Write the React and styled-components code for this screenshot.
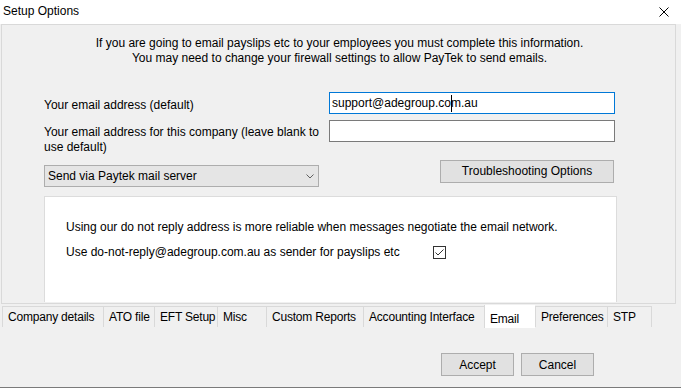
import React from 'react';
import styled, { createGlobalStyle } from 'styled-components';

const GlobalStyle = createGlobalStyle`
    html, body {
        margin: 0;
        padding: 0;
        background: #ffffff;
    }
    body {
        font-family: "Liberation Sans", Arial, sans-serif;
        font-size: 12px;
        color: #000000;
    }
    *{
        box-sizing: border-box;
    }
`;

const tabs = [
    {label: 'Company details', w: 101},
    {label: 'ATO file', w: 51},
    {label: 'EFT Setup', w: 63},
    {label: 'Misc', w: 49},
    {label: 'Custom Reports', w: 97},
    {label: 'Accounting Interface', w: 121},
    {label: 'Email', w: 51, selected: true},
    {label: 'Preferences', w: 72},
    {label: 'STP', w: 45},
];

const App = () => {
    return(
        <>
            <GlobalStyle />
            <Window>
                <TitleBar>
                    <span>Setup Options</span>
                    <svg width="10" height="10" viewBox="0 0 10 10">
                        <path d="M0.5 0.5 L9.5 9.5 M9.5 0.5 L0.5 9.5" stroke="#000" strokeWidth="1" fill="none"/>
                    </svg>
                </TitleBar>
                <Body>
                    <Panel>
                        <Intro>
                            If you are going to email payslips etc to your employees you must complete this information.<br/>
                            You may need to change your firewall settings to allow PayTek to send emails.
                        </Intro>
                        <Form>
                            <Label $top={6}>Your email address (default)</Label>
                            <TextBox $focused>support@adegroup.co<Caret/>m.au</TextBox>
                            <Label $top={5}>Your email address for this company (leave blank to use default)</Label>
                            <TextBox></TextBox>
                        </Form>
                        <ActionRow>
                            <Select>
                                <span>Send via Paytek mail server</span>
                                <svg width="8" height="5" viewBox="0 0 8 5">
                                    <polyline points="0.5,0.5 4,4 7.5,0.5" stroke="#606060" strokeWidth="1" fill="none"/>
                                </svg>
                            </Select>
                            <Button $w={174}>Troubleshooting Options</Button>
                        </ActionRow>
                        <GroupBox>
                            <p>Using our do not reply address is more reliable when messages negotiate the email network.</p>
                            <CheckRow>
                                <span>Use do-not-reply@adegroup.com.au as sender for payslips etc</span>
                                <CheckBox>
                                    <svg width="11" height="11" viewBox="0 0 11 11">
                                        <polyline points="1.5,5.5 4,8 9.5,2.5" stroke="#333" strokeWidth="1" fill="none"/>
                                    </svg>
                                </CheckBox>
                            </CheckRow>
                        </GroupBox>
                    </Panel>
                    <TabStrip>
                        {tabs.map((t, i) => (
                            <Tab key={t.label} $w={t.w} $selected={t.selected} $last={i === tabs.length - 1}>
                                {t.label}
                            </Tab>
                        ))}
                    </TabStrip>
                    <Footer>
                        <Button $w={73}>Accept</Button>
                        <Button $w={73}>Cancel</Button>
                    </Footer>
                </Body>
            </Window>
        </>
    );
}

const Window = styled.div`
    width: 681px;
    height: 388px;
    background: #f0f0f0;
    display: flex;
    flex-direction: column;
    border-bottom: 1px solid #7a7a7a;
`;

const TitleBar = styled.div`
    height: 24px;
    flex: none;
    background: #ffffff;
    display: flex;
    align-items: center;
    justify-content: space-between;
    padding: 0 12px 1px 3px;
    line-height: 15px;
    svg{
        display: block;
    }
`;

const Body = styled.div`
    flex: 1;
    display: flex;
    flex-direction: column;
    padding: 0 5px 0 1px;
`;

const Panel = styled.div`
    height: 280px;
    flex: none;
    border: 1px solid #d9d9d9;
    display: flex;
    flex-direction: column;
    line-height: 15px;
`;

const Intro = styled.p`
    margin: 11px 0 0;
    padding-left: 2px;
    text-align: center;
`;

const Form = styled.div`
    display: grid;
    grid-template-columns: 285px 286px;
    row-gap: 6px;
    margin: 26px 0 0 42px;
`;

const Label = styled.div`
    padding-top: ${p => p.$top}px;
    padding-right: 6px;
`;

const TextBox = styled.div`
    height: 22px;
    background: #ffffff;
    border: 1px solid ${p => p.$focused ? '#0078d7' : '#7a7a7a'};
    padding: 0 2px;
    display: flex;
    align-items: center;
    white-space: pre;
`;

const Caret = styled.span`
    display: inline-block;
    width: 1px;
    height: 17px;
    background: #000000;
    margin-right: -1px;
`;

const ActionRow = styled.div`
    width: 571px;
    margin: 5px 0 0 42px;
    display: flex;
    justify-content: space-between;
    align-items: flex-start;
`;

const Select = styled.div`
    width: 275px;
    height: 22px;
    margin-top: 5px;
    background: #e5e5e5;
    border: 1px solid #adadad;
    display: flex;
    align-items: center;
    justify-content: space-between;
    padding: 0 4px 0 3px;
`;

const Button = styled.div`
    width: ${p => p.$w}px;
    height: 23px;
    background: #e1e1e1;
    border: 1px solid #adadad;
    display: flex;
    align-items: center;
    justify-content: center;
    margin-right: 1px;
`;

const GroupBox = styled.div`
    flex: 1;
    width: 573px;
    margin: 9px 0 1px 42px;
    background: #ffffff;
    border: 1px solid #dcdcdc;
    border-bottom: none;
    padding: 23px 0 0 21px;
    p{
        margin: 0;
    }
`;

const CheckRow = styled.div`
    display: flex;
    align-items: center;
    height: 15px;
    margin-top: 10px;
    span{
        width: 367px;
    }
`;

const CheckBox = styled.div`
    width: 13px;
    height: 13px;
    border: 1px solid #333333;
    background: #ffffff;
    svg{
        display: block;
    }
`;

const TabStrip = styled.div`
    height: 24px;
    flex: none;
    display: flex;
    align-items: flex-start;
    margin-left: 1px;
    line-height: 15px;
    letter-spacing: -0.2px;
`;

const Tab = styled.div`
    width: ${p => p.$w}px;
    height: ${p => p.$selected ? 23 : 21}px;
    margin-top: ${p => p.$selected ? 1 : 2}px;
    padding: ${p => p.$selected ? 7 : 3}px 0 0 5px;
    background: ${p => p.$selected ? '#ffffff' : 'transparent'};
    border-left: 1px solid #d9d9d9;
    border-top: ${p => p.$selected ? 'none' : '1px solid #d9d9d9'};
    border-right: ${p => p.$last ? '1px solid #d9d9d9' : 'none'};
    white-space: nowrap;
`;

const Footer = styled.div`
    display: flex;
    justify-content: flex-end;
    gap: 6px;
    margin-top: 25px;
    padding-right: 81px;
`;

export default App;
